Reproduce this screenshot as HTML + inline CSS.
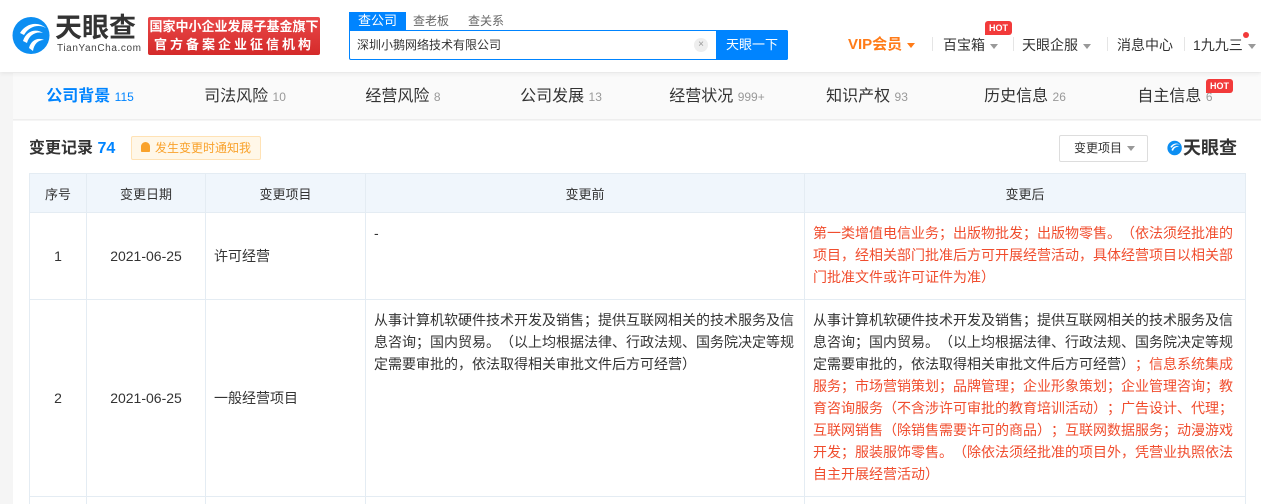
<!DOCTYPE html>
<html><head><meta charset="utf-8">
<style>
*{margin:0;padding:0;box-sizing:border-box}
html{width:1261px;height:504px;overflow:hidden}
body{width:1261px;height:504px;overflow:hidden;background:#f5f5f5;font-family:"Liberation Sans","Noto Sans CJK SC",sans-serif;color:#333;position:relative;text-spacing-trim:space-all}
.hdr{position:absolute;left:0;top:0;width:1261px;height:72px;background:#fff;box-shadow:0 2px 4px rgba(0,0,0,.06);z-index:2}
.abs{position:absolute}
.tabs{position:absolute;left:13px;top:73px;width:1248px;height:47px;background:#fafafa;border-bottom:1px solid #eee}
.tab{position:absolute;top:0;height:47px;line-height:47px;font-size:16px;color:#333;text-align:center;white-space:nowrap}
.tab small{font-size:12px;color:#999}
.main{position:absolute;left:13px;top:121px;width:1248px;height:383px;background:#fff}
table{position:absolute;left:29px;top:173px;border-collapse:collapse;font-size:14px;color:#333;table-layout:fixed}
td,th{border:1px solid #e4ecf3;vertical-align:middle}
th{background:#f0f6fc;font-weight:normal;height:39px;text-align:center;font-size:13px}
td{line-height:22px}
.red{color:#f04d2e}
.hot{position:absolute;background:#f23a3a;color:#fff;font-size:9px;font-weight:bold;height:14px;line-height:14px;padding:0 4px;border-radius:3px 3px 3px 0}
.sep{position:absolute;top:37px;width:1px;height:14px;background:#e5e5e5}
.tri{display:inline-block;width:0;height:0;border-left:4px solid transparent;border-right:4px solid transparent;border-top:5px solid #999;vertical-align:middle;margin-left:5px}
</style></head><body>
<div class="hdr">
  <svg class="abs" style="left:12px;top:15px" width="40" height="41" viewBox="0 0 40 41">
    <circle cx="19" cy="20.5" r="18.5" fill="#0c8ef2"/>
    <path d="M8 18 C14 8 26 6 34 13 C27 9 17 11 12 20 Z" fill="#fff"/>
    <path d="M11 26 C14 16 24 13 31 18 C24 16 17 20 15 28 Z" fill="#fff"/>
    <path d="M17 33 C19 25 26 22 32 25 C26 25 22 29 21 36 Z" fill="#fff"/>
  </svg>
  <div class="abs" style="left:55px;top:13px;font-size:27px;font-weight:bold;color:#333;line-height:30px">天眼查</div>
  <div class="abs" style="left:57px;top:43px;font-size:10px;color:#444;letter-spacing:0.6px">TianYanCha.com</div>
  <div class="abs" style="left:148px;top:17px;width:172px;height:38px;background:linear-gradient(#e94848,#d42a2a);border-radius:2px;color:#fff;font-size:13px;font-weight:bold;text-align:center;line-height:18px;padding-top:1px">国家中小企业发展子基金旗下<br><span style="letter-spacing:3px">官方备案企业征信机构</span></div>
  <div class="abs" style="left:349px;top:12px;width:57px;height:19px;background:#0084ff;color:#fff;font-size:13px;text-align:center;line-height:18px">查公司</div>
  <div class="abs" style="left:413px;top:12px;font-size:12px;color:#666;line-height:18px">查老板</div>
  <div class="abs" style="left:468px;top:12px;font-size:12px;color:#666;line-height:18px">查关系</div>
  <div class="abs" style="left:349px;top:30px;width:439px;height:30px;border:1px solid #0084ff;border-radius:0 2px 2px 2px"></div>
  <div class="abs" style="left:357px;top:30px;font-size:12px;color:#333;line-height:30px">深圳小鹅网络技术有限公司</div>
  <div class="abs" style="left:694px;top:38px;width:14px;height:14px;border-radius:7px;background:#eee;color:#999;font-size:10px;text-align:center;line-height:14px">×</div>
  <div class="abs" style="left:716px;top:30px;width:72px;height:30px;background:#0084ff;color:#fff;font-size:13px;text-align:center;line-height:30px;border-radius:0 2px 2px 0">天眼一下</div>
  <div class="abs" style="left:848px;top:35px;font-size:15px;font-weight:bold;color:#ff7b18;line-height:20px">VIP会员<span class="tri" style="border-top-color:#ff7b18"></span></div>
  <div class="sep" style="left:932px"></div>
  <div class="abs" style="left:943px;top:35px;font-size:14px;color:#333;line-height:20px">百宝箱<span class="tri"></span></div>
  <div class="hot" style="left:985px;top:21px">HOT</div>
  <div class="sep" style="left:1013px"></div>
  <div class="abs" style="left:1022px;top:35px;font-size:14px;color:#333;line-height:20px">天眼企服<span class="tri"></span></div>
  <div class="sep" style="left:1107px"></div>
  <div class="abs" style="left:1117px;top:35px;font-size:14px;color:#333;line-height:20px">消息中心</div>
  <div class="sep" style="left:1184px"></div>
  <div class="abs" style="left:1193px;top:35px;font-size:14px;color:#333;line-height:20px">1九九三<span class="tri"></span></div>
  <div class="abs" style="left:1243px;top:32px;width:6px;height:6px;border-radius:3px;background:#f23a3a"></div>
</div>
<div class="tabs">
  <div class="tab" style="left:0;width:154px;color:#0084ff;font-weight:bold">公司背景 <small style="color:#0084ff;font-weight:normal">115</small></div>
  <div class="tab" style="left:150px;width:164px">司法风险 <small>10</small></div>
  <div class="tab" style="left:308px;width:164px">经营风险 <small>8</small></div>
  <div class="tab" style="left:466px;width:164px">公司发展 <small>13</small></div>
  <div class="tab" style="left:622px;width:164px">经营状况 <small>999+</small></div>
  <div class="tab" style="left:772px;width:164px">知识产权 <small>93</small></div>
  <div class="tab" style="left:930px;width:164px">历史信息 <small>26</small></div>
  <div class="tab" style="left:1080px;width:164px">自主信息 <small>6</small></div>
  <div class="hot" style="left:1193px;top:6px">HOT</div>
</div>
<div class="main"></div>
<div class="abs" style="left:29px;top:138px;font-size:16px;font-weight:bold;color:#333;line-height:22px">变更记录 <span style="color:#0084ff">74</span></div>
<div class="abs" style="left:131px;top:136px;width:130px;height:24px;background:#fff7e8;border:1px solid #ffe2b5;border-radius:2px;color:#f9a22c;font-size:12px;line-height:22px;padding-left:23px">发生变更时通知我</div>
<div class="abs" style="left:141px;top:142px;width:9px;height:10px;background:#f9a22c;border-radius:5px 5px 1px 1px"></div>
<div class="abs" style="left:1059px;top:135px;width:89px;height:27px;border:1px solid #ddd;border-radius:2px;font-size:12px;color:#333;line-height:25px;padding-left:14px">变更项目<span class="tri"></span></div>
<svg class="abs" style="left:1167px;top:140px" width="16" height="16" viewBox="0 0 40 41"><circle cx="19" cy="20.5" r="18.5" fill="#0c8ef2"/><path d="M8 18 C14 8 26 6 34 13 C27 9 17 11 12 20 Z M11 26 C14 16 24 13 31 18 C24 16 17 20 15 28 Z" fill="#fff"/></svg>
<div class="abs" style="left:1183px;top:136px;font-size:18px;font-weight:bold;color:#333;line-height:24px">天眼查</div>
<table>
<colgroup><col style="width:57px"><col style="width:119px"><col style="width:160px"><col style="width:439px"><col style="width:441px"></colgroup>
<tr><th>序号</th><th>变更日期</th><th>变更项目</th><th>变更前</th><th>变更后</th></tr>
<tr style="height:87px"><td style="text-align:center">1</td><td style="text-align:center">2021-06-25</td><td style="padding-left:8px">许可经营</td><td style="vertical-align:top;padding:9px 8px">-</td><td class="red" style="padding:9px 8px;vertical-align:top">第一类增值电信业务；出版物批发；出版物零售。（依法须经批准的项目，经相关部门批准后方可开展经营活动，具体经营项目以相关部门批准文件或许可证件为准）</td></tr>
<tr style="height:197px"><td style="text-align:center">2</td><td style="text-align:center">2021-06-25</td><td style="padding-left:8px">一般经营项目</td><td style="vertical-align:top;padding:9px 8px">从事计算机软硬件技术开发及销售；提供互联网相关的技术服务及信息咨询；国内贸易。（以上均根据法律、行政法规、国务院决定等规定需要审批的，依法取得相关审批文件后方可经营）</td><td style="padding:9px 8px;vertical-align:top">从事计算机软硬件技术开发及销售；提供互联网相关的技术服务及信息咨询；国内贸易。（以上均根据法律、行政法规、国务院决定等规定需要审批的，依法取得相关审批文件后方可经营）<span class="red">；信息系统集成服务；市场营销策划；品牌管理；企业形象策划；企业管理咨询；教育咨询服务（不含涉许可审批的教育培训活动）；广告设计、代理；互联网销售（除销售需要许可的商品）；互联网数据服务；动漫游戏开发；服装服饰零售。（除依法须经批准的项目外，凭营业执照依法自主开展经营活动）</span></td></tr>
<tr style="height:20px"><td></td><td></td><td></td><td></td><td></td></tr>
</table>
</body></html>
